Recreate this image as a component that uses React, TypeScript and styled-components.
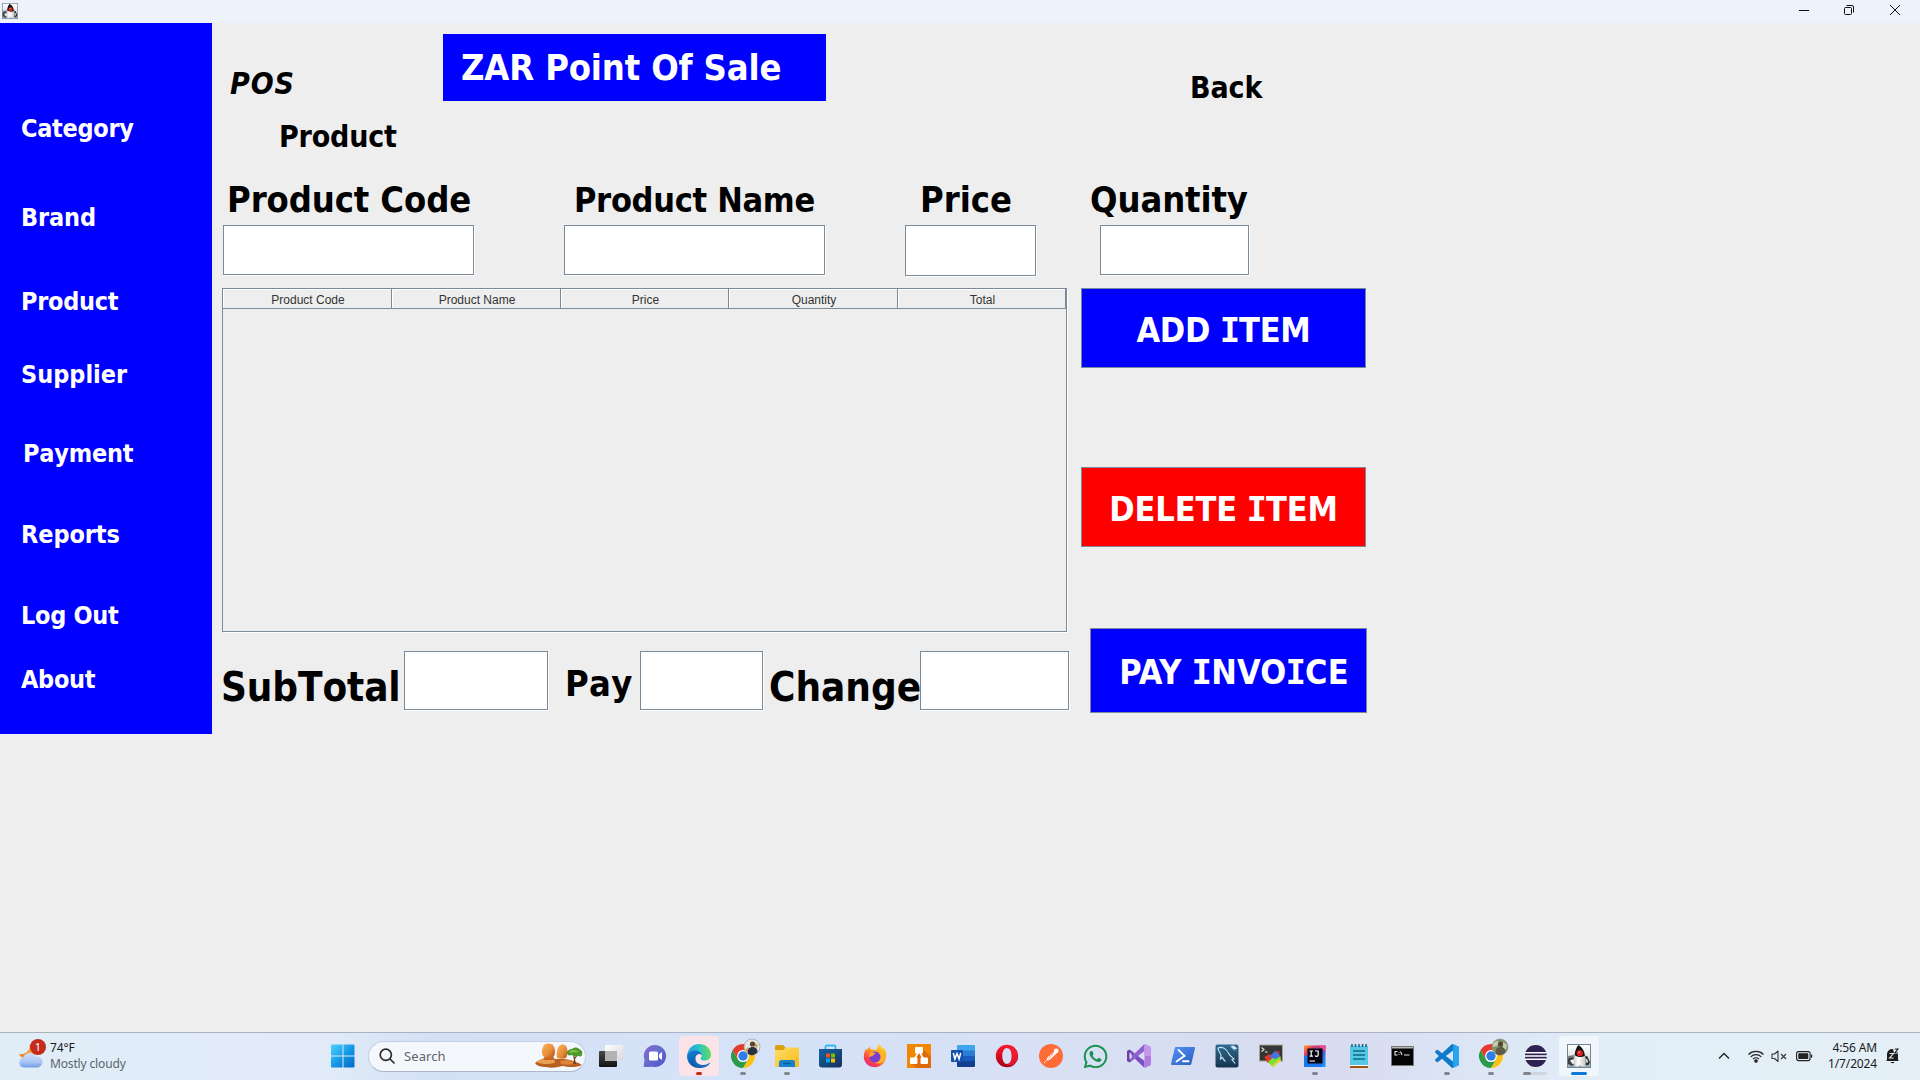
import React from 'react';
import styled, { createGlobalStyle } from 'styled-components';
import { FaWhatsapp } from 'react-icons/fa';

const BLUE = '#0000ff';
const LINE = '#7a8a99';

const GlobalStyle = createGlobalStyle`
  * { box-sizing: border-box; }
  html, body { margin: 0; padding: 0; overflow: hidden; }
`;

const Screen = styled.div`
  display: flex;
  flex-direction: column;
  width: 1920px;
  height: 1080px;
  background: #eeeeee;
  font-family: 'DejaVu Sans Condensed', 'DejaVu Sans', sans-serif;
  font-stretch: condensed;
`;

/* ---------- window frame ---------- */

const TitleBar = styled.header`
  display: flex;
  align-items: center;
  justify-content: space-between;
  height: 23px;
  padding: 0 19px 3px 2px;
  background: #eef3fb;
`;

const AppIcon = styled.span`
  display: flex;
  padding-top: 2px;
`;

const WindowControls = styled.div`
  display: flex;
  gap: 34px;
  svg { display: block; }
`;

const Frame = styled.div`
  display: flex;
  align-items: flex-start;
  height: 1009px;
`;

/* ---------- sidebar ---------- */

const Sidebar = styled.nav`
  display: flex;
  flex-direction: column;
  width: 212px;
  height: 711px;
  padding-left: 21px;
  background: ${BLUE};
`;

const NavLink = styled.a<{ $gap: number; $indent?: number; $track?: number }>`
  margin-top: ${(p) => p.$gap}px;
  padding-left: ${(p) => p.$indent ?? 0}px;
  color: #fff;
  font-size: 25px;
  font-weight: bold;
  font-kerning: none;
  line-height: 30px;
  letter-spacing: ${(p) => p.$track ?? 0}px;
  white-space: nowrap;
`;

/* ---------- main area ---------- */

const Main = styled.main`
  display: flex;
  flex-direction: column;
  padding-left: 10px;
`;

const Header = styled.div`
  display: flex;
  align-items: flex-start;
  height: 156px;
`;

const HeaderTitles = styled.div`
  display: flex;
  flex-direction: column;
  gap: 17px;
  width: 221px;
  padding-top: 43px;
`;

const Label = styled.label<{
  $size: number;
  $line: number;
  $track?: number;
  $indent?: number;
  $italic?: boolean;
}>`
  display: block;
  flex: none;
  margin-left: ${(p) => p.$indent ?? 0}px;
  color: #000;
  font-size: ${(p) => p.$size}px;
  font-weight: bold;
  font-style: ${(p) => (p.$italic ? 'italic' : 'normal')};
  font-kerning: none;
  line-height: ${(p) => p.$line}px;
  letter-spacing: ${(p) => p.$track ?? 0}px;
  white-space: nowrap;
`;

const Banner = styled.h1`
  width: 383px;
  height: 67px;
  margin: 11px 0 0;
  padding-left: 18px;
  background: ${BLUE};
  color: #fff;
  font-size: 36px;
  font-kerning: none;
  line-height: 68px;
  letter-spacing: -0.15px;
  white-space: nowrap;
`;

const BackSlot = styled.div`
  padding: 47px 0 0 364px;
`;

const FieldRow = styled.div`
  display: grid;
  grid-template-columns: 341px 341px 195px 160px;
  height: 109px;
  padding-left: 1px;
`;

const Field = styled.div`
  display: flex;
  flex-direction: column;
  gap: 4px;
`;

const TextBox = styled.input<{ $w: number; $h: number }>`
  display: block;
  flex: none;
  width: ${(p) => p.$w - 1}px;
  height: ${(p) => p.$h - 1}px;
  margin: 0 1px 0 0;
  padding: 0 4px;
  border: 1px solid ${LINE};
  border-radius: 0;
  outline: none;
  background: #fff;
  box-shadow: 1px 1px 0 #fff;
`;

const Workspace = styled.div`
  display: flex;
  gap: 11px;
`;

const Register = styled.section`
  display: flex;
  flex-direction: column;
  gap: 19px;
  width: 848px;
`;

const TablePane = styled.div`
  width: 845px;
  height: 344px;
  border: 1px solid ${LINE};
  box-shadow: 1px 1px 0 #fff;
`;

const TableHead = styled.div`
  display: grid;
  grid-template-columns: 169px 169px 168px 169px 168px;
  grid-template-rows: 20px;
`;

const HeadCell = styled.div`
  padding-left: 2px;
  border-right: 1px solid ${LINE};
  border-bottom: 1px solid ${LINE};
  box-shadow: inset 1px 1px 0 #fff;
  color: #333;
  font: 12px/22px 'Liberation Sans', Arial, sans-serif;
  text-align: center;
`;

const Totals = styled.div`
  display: flex;
  align-items: flex-start;
`;

const TotalLabel = styled.div<{ $w: number; $pad: number }>`
  width: ${(p) => p.$w}px;
  padding: 12px 0 0 ${(p) => p.$pad}px;
`;

const Actions = styled.div`
  display: flex;
  flex-direction: column;
  width: 286px;
`;

const ActionButton = styled.button<{
  $w: number;
  $h: number;
  $gap?: number;
  $end?: number;
  $shift?: number;
  $track: number;
  $color: string;
}>`
  align-self: flex-end;
  width: ${(p) => p.$w}px;
  height: ${(p) => p.$h}px;
  margin: ${(p) => p.$gap ?? 0}px ${(p) => p.$end ?? 1}px 0 0;
  padding: 3px 0 0 ${(p) => p.$shift ?? 0}px;
  border: 1px solid ${LINE};
  border-radius: 0;
  background: ${(p) => p.$color};
  color: #fff;
  font-family: inherit;
  font-size: 34px;
  font-weight: bold;
  line-height: 40px;
  letter-spacing: ${(p) => p.$track}px;
  white-space: nowrap;
`;

const SlabI = styled.span`
  margin: 0 -1px;
  font-family: 'DejaVu Sans Mono', monospace;
  font-stretch: normal;
  line-height: 1;
`;

/* ---------- taskbar ---------- */

const Taskbar = styled.footer`
  display: flex;
  align-items: center;
  height: 48px;
  padding-bottom: 1px;
  border-top: 1px solid #aab1c0;
  background: linear-gradient(90deg, #e0edf7 0%, #e1ebf8 17%, #d3e0f5 23%, #d5e2f7 40%, #d8e0f4 55%, #d8dcf0 70%, #dce6f5 77%, #e3eff8 85%, #e4eff7 100%);
  font-family: 'Noto Sans', 'Open Sans', sans-serif;
  font-stretch: normal;
`;

const Weather = styled.div`
  display: flex;
  gap: 4px;
  width: 331px;
  padding-left: 18px;
`;

const WeatherIcon = styled.span`
  position: relative;
  width: 28px;
  height: 32px;
`;

const Badge = styled.span`
  position: absolute;
  top: -1px;
  left: 12px;
  width: 16px;
  height: 16px;
  border-radius: 50%;
  background: #c42b1c;
  color: #fff;
  font-size: 11px;
  line-height: 16px;
  text-align: center;
`;

const TwoLines = styled.div<{ $right?: boolean }>`
  display: flex;
  flex-direction: column;
  color: #1b1b1b;
  font-size: 12px;
  line-height: 16px;
  text-align: ${(p) => (p.$right ? 'right' : 'left')};
  letter-spacing: -0.15px;
  white-space: nowrap;
`;

const Muted = styled.span`
  color: #5d6369;
`;

const SearchPill = styled.div`
  display: flex;
  align-items: center;
  width: 218px;
  height: 31px;
  margin: 0 3px 0 13px;
  padding: 0 2px 0 10px;
  border: 1px solid #c3cee2;
  border-bottom-color: #adb7cd;
  border-radius: 16px;
  background: #f4f8fd;
  color: #5f6469;
  font-size: 13px;
`;

const SearchText = styled.span`
  flex: 1;
  padding: 0 0 1px 9px;
  letter-spacing: 0.1px;
`;

const Pins = styled.div`
  display: flex;
`;

const Pin = styled.span<{ $bg?: string }>`
  display: flex;
  position: relative;
  align-items: center;
  justify-content: center;
  width: 40px;
  height: 40px;
  margin: 0 2px;
  border-radius: 4px;
  background: ${(p) => p.$bg ?? 'transparent'};
  svg { display: block; overflow: visible; }
`;

const Running = styled.i<{ $w?: number; $color?: string; $left?: number }>`
  position: absolute;
  bottom: 1px;
  left: ${(p) => p.$left ?? 20 - (p.$w ?? 6) / 2}px;
  width: ${(p) => p.$w ?? 6}px;
  height: 3px;
  border-radius: 2px;
  background: ${(p) => p.$color ?? '#80868e'};
`;

const Tray = styled.div`
  display: flex;
  align-items: center;
  margin-left: auto;
  padding-right: 19px;
  svg { display: block; }
`;

const TrayItem = styled.span<{ $gap: number }>`
  margin-left: ${(p) => p.$gap}px;
`;

const Clock = styled.div`
  width: 64px;
  margin-right: 8px;
`;

/* ---------- drawings ---------- */

const Duke = ({ size }: { size: number }) => (
  <svg width={size} height={size} viewBox="0 0 24 24">
    <defs>
      <linearGradient id="dukeBg" x1="0" y1="0" x2="0" y2="1">
        <stop offset="0" stopColor="#ffffff" />
        <stop offset="0.5" stopColor="#e3e8ec" />
        <stop offset="1" stopColor="#90a6b5" />
      </linearGradient>
      <linearGradient id="dukeBody" x1="0" y1="0" x2="1" y2="0">
        <stop offset="0" stopColor="#d9d9d9" />
        <stop offset="0.4" stopColor="#ffffff" />
        <stop offset="1" stopColor="#c4c4c4" />
      </linearGradient>
    </defs>
    <rect x="0.5" y="0.5" width="23" height="23" fill="url(#dukeBg)" stroke="#6f8697" />
    <path d="M1 12l6-1 2 3-3 2-5 0z" fill="#777e82" />
    <path d="M1 15c2-2 5-2 7 0l1 4-4 3-4-2z" fill="#3b3f42" />
    <path d="M3 16.500l4-1.500 2 3-3 2.500z" fill="#f4f4f4" />
    <path d="M16.500 11l4 1.500 2.500 6-2 3-3-1z" fill="#2c3033" />
    <path d="M18.500 14.500l2 1 .500 3-1.500.500z" fill="#dedede" />
    <path d="M8.500 9C6.500 13 6.500 19 8 22.800h3l1.800-1.600 2 1.600h3c1.700-4.500 1.200-9-.800-13z" fill="url(#dukeBody)" stroke="#9a9a9a" strokeWidth=".4" />
    <path d="M11.500 1C9.500 3 7.800 7 7.700 11c2.500 2.300 7 2.800 10 1 .300-4-2.200-8.500-6.200-11z" fill="#141414" />
    <circle cx="12.800" cy="9.200" r="3" fill="#e3201b" />
    <circle cx="12" cy="8.200" r=".9" fill="#f88" />
  </svg>
);

const WeatherArt = () => (
  <svg width="28" height="32" viewBox="0 0 28 32">
    <defs>
      <linearGradient id="moon" x1="0" y1="1" x2="1" y2="0">
        <stop offset="0" stopColor="#f0731c" />
        <stop offset="1" stopColor="#fbc14a" />
      </linearGradient>
      <linearGradient id="cloud" x1="0" y1="0" x2="0" y2="1">
        <stop offset="0" stopColor="#cfe0fb" />
        <stop offset="0.65" stopColor="#a9c4f3" />
        <stop offset="1" stopColor="#6f9be6" />
      </linearGradient>
    </defs>
    <path d="M11.500 4c1 6-3 11-10.500 10 2 4 7 6 11 4 6-2 8-8 5-12z" fill="url(#moon)" />
    <path d="M6 27.500a5 5 0 0 1-1-9.800 7 7 0 0 1 12.800-1.200 5.600 5.600 0 0 1 2.200 11z" fill="url(#cloud)" />
  </svg>
);

const StartLogo = () => (
  <svg width="24" height="24" viewBox="0 0 24 24">
    <defs>
      <linearGradient id="win" x1="0" y1="0" x2="1" y2="1">
        <stop offset="0" stopColor="#4fd2ff" />
        <stop offset="0.5" stopColor="#159be6" />
        <stop offset="1" stopColor="#0067c7" />
      </linearGradient>
    </defs>
    <path d="M1 .500h10.500V11.500H0V1.500a1 1 0 0 1 1-1zM12.500.500H22.500a1 1 0 0 1 1 1v10h-11zM0 12.500h11.500v11H1a1 1 0 0 1-1-1zM12.500 12.500h11v10a1 1 0 0 1-1 1h-10z" fill="url(#win)" />
  </svg>
);

const Magnifier = () => (
  <svg width="16" height="16" viewBox="0 0 16 16" fill="none" stroke="#2a2a2a" strokeWidth="1.700" strokeLinecap="round">
    <circle cx="6.800" cy="6.800" r="5.600" />
    <path d="M11 11l4 4" />
  </svg>
);

const Rocks = () => (
  <svg width="48" height="26" viewBox="0 0 48 26">
    <defs>
      <linearGradient id="rock" x1="0" y1="0" x2="1" y2="1">
        <stop offset="0" stopColor="#ffb65a" />
        <stop offset="0.6" stopColor="#e68a36" />
        <stop offset="1" stopColor="#a8521b" />
      </linearGradient>
    </defs>
    <path d="M0 20c4-3 8-5 14-4l16 0c7 1 14 4 17 6-6 3-14 2-20 1-6 2-12 2-16 1-5 0-9-1-11-4z" fill="#b55f22" />
    <path d="M1 19c4-3 9-5 16-3 3 1 4 3 2 4-6 2-13 1-18-1z" fill="#eaa052" />
    <path d="M25 18c6-2 13-1 17 2-5 2-11 2-16 1z" fill="#dd8437" />
    <path d="M10 13h8l2 4H8z" fill="#c46a26" />
    <path d="M9 2c2-2 7-2 9 0 2 3 3 7 1 11-3 2-8 2-11 0-2-4-1-8 1-11z" fill="url(#rock)" />
    <path d="M24 3c2-2 5-2 7 0 2 3 2 8 0 12-3 1-6 1-9 0-1-4 0-9 2-12z" fill="url(#rock)" />
    <path d="M38 12l1 5-1 4h3l-1-5 3-4-3 2z" fill="#6e3e1d" />
    <path d="M32 10c0-3 3-4 5-4 2-2 6-2 7 0 3 1 4 3 3 5 1 2-2 3-4 2-3 1-5 0-6-1-3 1-5 0-5-2z" fill="#4f9a2e" />
    <path d="M34 9c1-2 5-3 9-1 1 1-2 2-4 1-2 1-4 1-5 0z" fill="#83c046" />
  </svg>
);

const TaskView = () => (
  <svg width="24" height="24" viewBox="0 0 24 24">
    <defs>
      <linearGradient id="tvDark" x1="0" y1="0" x2="0" y2="1">
        <stop offset="0" stopColor="#4a4a4a" />
        <stop offset="1" stopColor="#111" />
      </linearGradient>
      <linearGradient id="tvLight" x1="0" y1="0" x2="1" y2="1">
        <stop offset="0" stopColor="#fff" />
        <stop offset="1" stopColor="#d8d8d8" />
      </linearGradient>
    </defs>
    <rect x="0" y="7" width="18" height="16" rx="1" fill="url(#tvDark)" />
    <rect x="6" y="1" width="18" height="16" rx="1" fill="url(#tvLight)" />
    <path d="M6 7h12v10H7a1 1 0 0 1-1-1z" fill="#b2b2b2" />
  </svg>
);

const Chat = () => (
  <svg width="24" height="24" viewBox="0 0 24 24">
    <defs>
      <linearGradient id="chat" x1="0" y1="0" x2="1" y2="1">
        <stop offset="0" stopColor="#8b62c9" />
        <stop offset="0.4" stopColor="#6a6fd0" />
        <stop offset="1" stopColor="#4f52c4" />
      </linearGradient>
    </defs>
    <path d="M12 1a11 11 0 1 1-2 21.800L1.500 23a.800.800 0 0 1-.800-1L1.500 16A11 11 0 0 1 12 1z" fill="url(#chat)" />
    <rect x="6" y="7.500" width="9" height="9" rx="1.500" fill="#fff" />
    <path d="M16 10.500l3-2.500v8l-3-2.500z" fill="#fff" />
  </svg>
);

const Edge = () => (
  <svg width="24" height="24" viewBox="0 0 24 24">
    <defs>
      <linearGradient id="edgeTop" x1="0" y1=".5" x2="1" y2=".4">
        <stop offset="0" stopColor="#1f9fe0" />
        <stop offset="0.5" stopColor="#29c3c8" />
        <stop offset="1" stopColor="#66de55" />
      </linearGradient>
      <linearGradient id="edgeLow" x1="0" y1="0" x2="0.6" y2="1">
        <stop offset="0" stopColor="#1284d8" />
        <stop offset="1" stopColor="#0b4f9e" />
      </linearGradient>
    </defs>
    <path d="M.300 10.500C1.200 4.500 6 0 12 0c7 0 12 5 12 10.500 0 4-3 6-6.200 6-3 0-4.300-1-4.300-1.800 0-.700 1.200-1.200 1.200-3.200 0-2.800-2.700-5-6.200-5C4.500 6.500 1.500 8 .300 10.500z" fill="url(#edgeTop)" />
    <path d="M.300 10.500C1.500 8 4.500 6.300 8 6.300c3.500 0 6.500 2 6.700 5C14 10.200 12.600 9.600 11.500 10c-3.500 1.500-4.500 5-2.500 8.500s6 5 9 3.500C12 26.500 0 23 0 12z" fill="url(#edgeLow)" />
    <path d="M9.500 11.300C7.500 13.500 8 19 13 20.500c4 1.200 7 .100 9.300-1.500.500-.400.900.100.600.600C21 22.500 17 24.300 13 24 7 23.500 4.500 16 9.500 11.300z" fill="#1668b8" />
  </svg>
);

const Chrome = ({ person }: { person: 'city' | 'garden' }) => (
  <svg width="24" height="24" viewBox="0 0 24 24">
    <circle cx="12" cy="12" r="12" fill="#fff" />
    <path d="M12 6h10.400A12 12 0 0 1 12 24l5.200-9z" fill="#fbc116" />
    <path d="M1.600 6A12 12 0 0 0 12 24l5.200-9A6 6 0 0 1 6.800 15z" fill="#2a9b4a" />
    <path d="M1.600 6l5.200 9L8 9l4-3h10.400A12 12 0 0 0 1.600 6z" fill="#e33b2e" />
    <circle cx="12" cy="12" r="5.900" fill="#fff" />
    <circle cx="12" cy="12" r="4.700" fill="#2f7de9" />
    <circle cx="21" cy="3" r="8" fill={person === 'city' ? '#e8e6e3' : '#80936b'} stroke="#8d8f8c" strokeWidth=".6" />
    <path d={person === 'city' ? 'M14 6l3-3 1 2-2 3zM24-1l3 2-1 3-3-2z' : 'M14 0l3-3 4 1-3 4-4 1zM24-2l4 3-1 5-3-2z'} fill={person === 'city' ? '#c9a65a' : '#c8ceb2'} />
    <circle cx="21.500" cy="0" r="2.600" fill="#5b4335" />
    <path d="M16.500 9c0-4 2-6 5-6s5 1.500 5 5c-3 4-8 4-10 1z" fill={person === 'city' ? '#2b3040' : '#5d5a45'} />
  </svg>
);

const Explorer = () => (
  <svg width="24" height="24" viewBox="0 0 24 24">
    <defs>
      <linearGradient id="folder" x1="0" y1="0" x2="1" y2="1">
        <stop offset="0" stopColor="#ffdc6a" />
        <stop offset="1" stopColor="#f8bb17" />
      </linearGradient>
    </defs>
    <path d="M0 2.500A1.500 1.500 0 0 1 1.500 1H8l2.500 2.500V8H0z" fill="#d9a00c" />
    <path d="M0 6h8.500l2-2.500H22.500A1.500 1.500 0 0 1 24 5v16.500a1.500 1.500 0 0 1-1.500 1.500H1.500A1.500 1.500 0 0 1 0 21.500z" fill="url(#folder)" />
    <path d="M4 23v-4.500A2.500 2.500 0 0 1 6.500 16h11a2.500 2.500 0 0 1 2.500 2.500V23z" fill="#1583cf" />
    <rect x="8" y="18.800" width="8" height="1.400" rx=".7" fill="#0b5a9a" />
  </svg>
);

const Store = () => (
  <svg width="24" height="24" viewBox="0 0 24 24">
    <defs>
      <linearGradient id="bag" x1="0" y1="0" x2="1" y2="1">
        <stop offset="0" stopColor="#1565a8" />
        <stop offset="1" stopColor="#15305a" />
      </linearGradient>
    </defs>
    <path d="M6.500 6V3A1.500 1.500 0 0 1 8 1.500h7A1.500 1.500 0 0 1 16.500 3v3" fill="none" stroke="#35b5ec" strokeWidth="1.800" />
    <path d="M0 5h23v15.500a3 3 0 0 1-3 3H3a3 3 0 0 1-3-3z" fill="url(#bag)" />
    <path d="M7 9.500h4v4H7z" fill="#f25022" /><path d="M12 9.500h4v4h-4z" fill="#7fba00" />
    <path d="M7 14.500h4v4H7z" fill="#00a4ef" /><path d="M12 14.500h4v4h-4z" fill="#ffb900" />
  </svg>
);

const Firefox = () => (
  <svg width="24" height="24" viewBox="0 0 24 24">
    <defs>
      <linearGradient id="fox" x1=".8" y1="0" x2=".2" y2="1">
        <stop offset="0" stopColor="#ffe226" />
        <stop offset="0.4" stopColor="#ff9a1f" />
        <stop offset="0.75" stopColor="#fb4048" />
        <stop offset="1" stopColor="#e8238b" />
      </linearGradient>
    </defs>
    <path d="M15.500 0c2 1.500 3.500 3 4 5 .800-.200 1.300-.900 1.400-1.400 2 3 2.600 6 2.100 9.400C22 19 17.500 23.300 12 23.300 5.500 23.300.800 18.500.800 12.500.800 9 2 6.500 3.300 4.500c0 1 .200 1.600.500 2C4.500 5 6 3 7.300 2.500c-.300 1.200 0 2.300.700 3 1.500-.200 3.500.100 4.500.800C14 5 15.200 3 15.500 0z" fill="url(#fox)" />
    <circle cx="11.800" cy="13" r="5.600" fill="#7b3fd0" />
    <path d="M6.500 9c2-1.500 5-.500 6.500.800-2 .100-2.500 1.200-3.200 2-.800 1-3.300.500-3.800 1.500z" fill="#ffa52b" />
    <path d="M12.500 6.500c4 1 6 4 5.500 7.500-.500 2.500-3 4.500-6 4.500 6 3 11-1 9.500-6.500-1-3.500-4.500-6-9-5.500z" fill="#ffb42c" />
  </svg>
);

const DrawIo = () => (
  <svg width="24" height="24" viewBox="0 0 24 24">
    <rect width="24" height="24" fill="#f08705" />
    <path d="M15 4l9 9v11H9l-5-5 6-8z" fill="#df6c0c" />
    <path d="M12 7L6.500 17M12 7l5.500 10" stroke="#fff" strokeWidth="1.600" />
    <rect x="8" y="3" width="8" height="6.500" rx="1" fill="#fff" />
    <rect x="3" y="13.500" width="7.500" height="6.500" rx="1" fill="#fff" />
    <rect x="13.500" y="13.500" width="7.500" height="6.500" rx="1" fill="#fff" />
  </svg>
);

const Word = () => (
  <svg width="24" height="24" viewBox="0 0 24 24">
    <path d="M6 2a1 1 0 0 1 1-1h16a1 1 0 0 1 1 1v5H6z" fill="#41a5ee" />
    <path d="M6 6.500h18V12H6z" fill="#2b7cd3" />
    <path d="M6 12h18v5.500H6z" fill="#185abd" />
    <path d="M6 17h18v5a1 1 0 0 1-1 1H7a1 1 0 0 1-1-1z" fill="#103f91" />
    <rect x="0" y="6" width="12" height="12" rx="1" fill="#1450ab" />
    <path d="M2.300 9l1.600 6 2.100-5.500 2.100 5.500 1.600-6" fill="none" stroke="#fff" strokeWidth="1.500" />
  </svg>
);

const Opera = () => (
  <svg width="24" height="24" viewBox="0 0 24 24">
    <defs>
      <linearGradient id="opera" x1="0" y1="0" x2="0" y2="1">
        <stop offset="0" stopColor="#ff1b2d" />
        <stop offset="1" stopColor="#a70014" />
      </linearGradient>
    </defs>
    <path fillRule="evenodd" d="M12 .800A11.200 11.200 0 1 1 12 23.200 11.200 11.200 0 0 1 12 .800zM12 4c-2.800 0-4.700 3.500-4.700 8s1.900 8 4.700 8 4.700-3.500 4.700-8S14.800 4 12 4z" fill="url(#opera)" />
    <path d="M12 4c3-2.500 7-1 9 2 2 4 2 8 0 12-2 3-6 4.500-9 2 2.800 0 4.700-3.500 4.700-8S14.800 4 12 4z" fill="#f0233a" opacity=".7" />
  </svg>
);

const Postman = () => (
  <svg width="24" height="24" viewBox="0 0 24 24">
    <circle cx="12" cy="12" r="12" fill="#ff6c37" />
    <circle cx="17.200" cy="6.800" r="2.400" fill="#fff" />
    <path d="M15.500 7.500l2 2-6.500 6-4 1.500 1.500-3.500z" fill="#fff" />
    <path d="M10 12.500l3 .300M6.500 17.500l-1.500 1.500" stroke="#fff" strokeWidth="1" />
    <path d="M9.500 14.500l5-5" stroke="#ff6c37" strokeWidth=".7" />
  </svg>
);

const VisualStudio = () => (
  <svg width="24" height="24" viewBox="0 0 24 24">
    <path fillRule="evenodd" d="M0 7l2.500-1.500L7 9l-.500 1.800-4-2.300v7l4-2.300L7 15l-4.500 3.500L0 17z" fill="#6b3fa8" />
    <path d="M2.500 5.500L17.500 17v7L5 12z" fill="#7a4fc0" />
    <path d="M2.500 18.500L17.500 7V0L5 12z" fill="#8f62cc" />
    <path d="M17.500 0L24 3v18l-6.500 3z" fill="#b07be0" />
    <path d="M17.500 0L24 3v9h-6.500z" fill="#c497ee" />
  </svg>
);

const PowerShell = () => (
  <svg width="24" height="24" viewBox="0 0 24 24">
    <defs>
      <linearGradient id="ps" x1="0" y1="0" x2="1" y2="1">
        <stop offset="0" stopColor="#5391fe" />
        <stop offset="1" stopColor="#2a5fb8" />
      </linearGradient>
    </defs>
    <path d="M5 3h18a1 1 0 0 1 1 1.200L20.300 20a1.300 1.300 0 0 1-1.300 1H1a1 1 0 0 1-1-1.200L3.800 4A1.300 1.300 0 0 1 5 3z" fill="url(#ps)" />
    <path d="M7.500 6l6 5.800L5.500 17.500M12 17.300h5.500" fill="none" stroke="#fff" strokeWidth="1.900" strokeLinecap="round" />
  </svg>
);

const MySql = () => (
  <svg width="24" height="24" viewBox="0 0 24 24">
    <defs>
      <linearGradient id="my" x1="0" y1="0" x2="0" y2="1">
        <stop offset="0" stopColor="#2e6c94" />
        <stop offset="1" stopColor="#16344d" />
      </linearGradient>
    </defs>
    <rect x=".5" y=".5" width="23" height="23" rx="2" fill="url(#my)" />
    <path d="M3 4c4-2 9 1 11 6 .800 2 3 3 5 5l-2 .500 3 4M3 4c0 3 2 4 3 7l-.500 4 2-1.500c.500 1.500 1.500 3 3 4" fill="none" stroke="#cfe1ee" strokeWidth="1.100" />
    <path d="M16 2.500l2.500 2.500L22 4.500 18.500 2zM18 4l2 2.500" stroke="#dce9f2" strokeWidth=".8" fill="#dce9f2" />
  </svg>
);

const Cmder = () => (
  <svg width="24" height="24" viewBox="0 0 24 24">
    <rect x=".5" y="1" width="23" height="16" fill="#353535" stroke="#aaa58f" />
    <path d="M2.500 3.500L5 5.500 2.500 7.500M6 8h2.500" fill="none" stroke="#eee" strokeWidth="1.100" />
    <path d="M5.500 13l5-3 3 3-2 5-3 1z" fill="#e2352c" />
    <path d="M11 12l5-5 4 2 1 3-5 4-3 0z" fill="#4773dd" />
    <path d="M17 7l4 .500L19 10z" fill="#d8362d" />
    <path d="M8.500 18l5-4 3 1 5-3 .500 4-8 7z" fill="#7ddf35" />
    <path d="M13 23.500l9-7-2-1-7 6z" fill="#f1ce25" />
  </svg>
);

const IntelliJ = () => (
  <svg width="24" height="24" viewBox="0 0 24 24">
    <defs>
      <linearGradient id="ij" x1="0" y1="0" x2="1" y2="1">
        <stop offset="0" stopColor="#f9a22b" />
        <stop offset="0.25" stopColor="#e7365f" />
        <stop offset="0.55" stopColor="#4a52d8" />
        <stop offset="1" stopColor="#13a4f5" />
      </linearGradient>
    </defs>
    <path d="M1 1.500h21.500v21.500H1z" fill="url(#ij)" />
    <path d="M1 12l4-1v8h14v4H1z" fill="#1b77f0" />
    <path d="M15 1.500h7.500V8L19 5z" fill="#f9447c" />
    <rect x="4.500" y="4.500" width="15" height="15" fill="#060312" />
    <path d="M6.500 7h3.500M8.200 7v5M6.500 12.200h3.500M12 7h3.200v4c0 1-.800 1.400-1.500 1.400s-1.400-.300-1.700-.900M6.500 17h5.500" fill="none" stroke="#fff" strokeWidth="1.200" />
  </svg>
);

const Notepad = () => (
  <svg width="24" height="24" viewBox="0 0 24 24">
    <path d="M3 19h18v5H3z" fill="#a4530e" />
    <path d="M3 20.500h18v1.500H3z" fill="#fff" />
    <path d="M3 2h18v19H3z" fill="#55c8e6" />
    <path d="M5 0v3M8.500 0v3M12 0v3M15.500 0v3M19 0v3" stroke="#13617f" strokeWidth="1.500" />
    <path d="M6 7h12M6 11h12M6 15h12" stroke="#126585" strokeWidth="1.500" />
  </svg>
);

const CommandPrompt = () => (
  <svg width="24" height="24" viewBox="0 0 24 24">
    <rect x=".5" y="2.500" width="22" height="19" fill="#050505" stroke="#777" />
    <path d="M1 3h21v1.500H1z" fill="#b9b9b9" />
    <path d="M6.500 7.500H4v3.500h2.500M8 8v.800M8 10.200v.800M9.500 7.500l1.500 3.500M13 11h5.500" fill="none" stroke="#e6e6e6" strokeWidth="1.100" />
  </svg>
);

const VsCode = () => (
  <svg width="24" height="24" viewBox="0 0 100 100">
    <path d="M96.460 10.800L75.860.870a6.230 6.230 0 00-7.110 1.200L29.350 38.040 12.190 25.010a4.160 4.160 0 00-5.320.240L1.360 30.260a4.170 4.170 0 000 6.170L16.240 50 1.350 63.580a4.170 4.170 0 000 6.170l5.510 5.010a4.160 4.160 0 005.320.240l17.170-13.030 39.460 35.960a6.220 6.220 0 007.060 1.190l20.590-9.910A6.250 6.250 0 00100 83.570V16.430a6.250 6.250 0 00-3.540-5.630zM75.020 72.700L45.110 50l29.910-22.700z" fill="#0d7bc9" />
    <path d="M75.860.870l20.600 9.930A6.250 6.250 0 01100 16.430v67.140a6.250 6.250 0 01-3.540 5.680L75.870 99.100z" fill="#27a5ee" />
  </svg>
);

const Eclipse = () => (
  <svg width="24" height="24" viewBox="0 0 24 24">
    <path d="M11 1A11.200 11.200 0 0 0 11 23 14 14 0 0 1 11 1z" fill="#f09a29" />
    <circle cx="12.800" cy="12" r="11" fill="#2c2255" />
    <path d="M1.500 8.800h22M1 12h23M1.500 15.200h22" stroke="#fff" strokeWidth="1.400" />
  </svg>
);

const WhatsApp = () => <FaWhatsapp size={27} color="#17934f" />;

const Minimise = () => (
  <svg width="12" height="12" viewBox="0 0 12 12">
    <path d="M2 6.500h10" stroke="#111" />
  </svg>
);
const Restore = () => (
  <svg width="12" height="12" viewBox="0 0 12 12" fill="none" stroke="#111">
    <rect x="1.500" y="3.500" width="7" height="7" rx="1" />
    <path d="M3.500 1.500H9a1.500 1.500 0 0 1 1.500 1.500v5.500" />
  </svg>
);
const Close = () => (
  <svg width="12" height="12" viewBox="0 0 12 12">
    <path d="M1 1l10 10M11 1l-10 10" stroke="#111" />
  </svg>
);

const Chevron = () => (
  <svg width="12" height="12" viewBox="0 0 12 12">
    <path d="M1 8.500l5-5 5 5" fill="none" stroke="#222" strokeWidth="1.400" />
  </svg>
);
const Wifi = () => (
  <svg width="16" height="16" viewBox="0 0 16 16" fill="none" stroke="#222" strokeWidth="1.200">
    <path d="M.500 6.500a10.500 10.500 0 0 1 15 0M2.700 8.900a7.400 7.400 0 0 1 10.600 0M5 11.100a4.300 4.300 0 0 1 6 0" />
    <circle cx="8" cy="13" r="1.200" fill="#222" />
  </svg>
);
const Mute = () => (
  <svg width="16" height="16" viewBox="0 0 16 16" fill="none" stroke="#333" strokeWidth="1.100">
    <path d="M1 6h2.500L7 3v10.500l-3.500-3H1z" strokeLinejoin="round" />
    <path d="M10 6l5 5M15 6l-5 5" />
  </svg>
);
const Battery = () => (
  <svg width="17" height="16" viewBox="0 0 17 16">
    <rect x=".6" y="3.600" width="13.500" height="9" rx="2" fill="none" stroke="#222" strokeWidth="1.100" />
    <rect x="2.300" y="5.300" width="10" height="5.600" rx=".6" fill="#222" />
    <path d="M15 6.200c1 .200 1.300.800 1.300 1.900s-.300 1.700-1.300 1.900z" fill="#222" />
  </svg>
);
const Bell = () => (
  <svg width="16" height="16" viewBox="0 0 16 16">
    <path d="M2 11.500V6a5 5 0 0 1 6-4.900L13 6v5.500l.700 1.500H1.300z" fill="#1d1d1d" />
    <path d="M5.500 14a2.200 2.200 0 0 0 4 0z" fill="#1d1d1d" />
    <path d="M8 0h6v6H9z" fill="#e4eff7" />
    <path d="M4.500 5.500h4L4.500 10h4" fill="none" stroke="#e4eff7" strokeWidth="1.100" />
    <path d="M9.800 1h3.200L9.800 5h3.200" fill="none" stroke="#1d1d1d" strokeWidth="1.100" />
  </svg>
);

/* ---------- content ---------- */

const NAV = [
  { text: 'Category', gap: 91, track: -0.3 },
  { text: 'Brand', gap: 59, track: -0.1 },
  { text: 'Product', gap: 54, track: -0.3 },
  { text: 'Supplier', gap: 43 },
  { text: 'Payment', gap: 49, indent: 2, track: -0.2 },
  { text: 'Reports', gap: 51, track: -0.1 },
  { text: 'Log Out', gap: 51, track: -0.3 },
  { text: 'About', gap: 34, track: -0.3 },
];

const FIELDS = [
  { text: 'Product Code', size: 36, indent: 4, track: -0.1, w: 252, h: 51 },
  { text: 'Product Name', size: 34, indent: 10, track: -0.3, w: 262, h: 51 },
  { text: 'Price', size: 36, indent: 15, track: 0, w: 132, h: 52 },
  { text: 'Quantity', size: 36, indent: -10, track: -0.1, w: 150, h: 51 },
];

const TOTALS = [
  { text: 'SubTotal', size: 40, line: 48, labelWidth: 182, indent: -1, pad: 0, track: -0.1, w: 145 },
  { text: 'Pay', size: 36, line: 42, labelWidth: 91, indent: 0, pad: 16, track: 0.3, w: 124 },
  { text: 'Change', size: 40, line: 48, labelWidth: 156, indent: 0, pad: 5, track: 0, w: 150 },
];

const COLUMNS = ['Product Code', 'Product Name', 'Price', 'Quantity', 'Total'];

const Caption = ({ text }: { text: string }) => (
  <>{text.split(/(I)/).map((part, i) => (part === 'I' ? <SlabI key={i}>I</SlabI> : part))}</>
);

type PinItem = { icon: React.ReactNode; bg?: string; mark?: React.ReactNode };

const PINS: PinItem[] = [
  { icon: <TaskView /> },
  { icon: <Chat /> },
  { icon: <Edge />, bg: '#fbe4e8', mark: <Running $color="#c42b1c" /> },
  { icon: <Chrome person="city" />, mark: <Running /> },
  { icon: <Explorer />, mark: <Running /> },
  { icon: <Store /> },
  { icon: <Firefox /> },
  { icon: <DrawIo /> },
  { icon: <Word /> },
  { icon: <Opera /> },
  { icon: <Postman /> },
  { icon: <WhatsApp /> },
  { icon: <VisualStudio /> },
  { icon: <PowerShell /> },
  { icon: <MySql /> },
  { icon: <Cmder /> },
  { icon: <IntelliJ />, mark: <Running /> },
  { icon: <Notepad /> },
  { icon: <CommandPrompt /> },
  { icon: <VsCode />, mark: <Running /> },
  { icon: <Chrome person="garden" />, mark: <Running /> },
  {
    icon: <Eclipse />,
    mark: (
      <>
        <Running $w={24} $color="#d0d6de" />
        <Running $w={8} $left={8} />
      </>
    ),
  },
  { icon: <Duke size={24} />, bg: '#f1f6fc', mark: <Running $w={16} $color="#0a78d4" /> },
];

export default function App() {
  return (
    <Screen>
      <GlobalStyle />
      <TitleBar>
        <AppIcon>
          <Duke size={16} />
        </AppIcon>
        <WindowControls>
          <Minimise />
          <Restore />
          <Close />
        </WindowControls>
      </TitleBar>

      <Frame>
        <Sidebar>
          {NAV.map((n) => (
            <NavLink key={n.text} $gap={n.gap} $indent={n.indent} $track={n.track}>
              {n.text}
            </NavLink>
          ))}
        </Sidebar>

        <Main>
          <Header>
            <HeaderTitles>
              <Label $size={30} $line={36} $indent={8} $track={0.9} $italic>
                POS
              </Label>
              <Label $size={30} $line={36} $indent={57} $track={-0.2}>
                Product
              </Label>
            </HeaderTitles>
            <Banner>ZAR Point Of Sale</Banner>
            <BackSlot>
              <Label $size={30} $line={36} $track={-0.1}>
                Back
              </Label>
            </BackSlot>
          </Header>

          <FieldRow>
            {FIELDS.map((f) => (
              <Field key={f.text}>
                <Label $size={f.size} $line={42} $indent={f.indent} $track={f.track}>
                  {f.text}
                </Label>
                <TextBox $w={f.w} $h={f.h} />
              </Field>
            ))}
          </FieldRow>

          <Workspace>
            <Register>
              <TablePane>
                <TableHead>
                  {COLUMNS.map((c) => (
                    <HeadCell key={c}>{c}</HeadCell>
                  ))}
                </TableHead>
              </TablePane>
              <Totals>
                {TOTALS.map((t) => (
                  <React.Fragment key={t.text}>
                    <TotalLabel $w={t.labelWidth} $pad={t.pad}>
                      <Label $size={t.size} $line={t.line} $track={t.track} $indent={t.indent}>
                        {t.text}
                      </Label>
                    </TotalLabel>
                    <TextBox $w={t.w} $h={60} />
                  </React.Fragment>
                ))}
              </Totals>
            </Register>
            <Actions>
              <ActionButton $w={285} $h={80} $track={-0.2} $color={BLUE}>
                <Caption text="ADD ITEM" />
              </ActionButton>
              <ActionButton $w={285} $h={80} $gap={99} $track={-0.1} $color="#ff0000">
                <Caption text="DELETE ITEM" />
              </ActionButton>
              <ActionButton $w={277} $h={85} $gap={81} $end={0} $shift={11} $track={0.2} $color={BLUE}>
                <Caption text="PAY INVOICE" />
              </ActionButton>
            </Actions>
          </Workspace>
        </Main>
      </Frame>

      <Taskbar>
        <Weather>
          <WeatherIcon>
            <WeatherArt />
            <Badge>1</Badge>
          </WeatherIcon>
          <TwoLines>
            <span>74°F</span>
            <Muted>Mostly cloudy</Muted>
          </TwoLines>
        </Weather>
        <StartLogo />
        <SearchPill>
          <Magnifier />
          <SearchText>Search</SearchText>
          <Rocks />
        </SearchPill>
        <Pins>
          {PINS.map((p, i) => (
            <Pin key={i} $bg={p.bg}>
              {p.icon}
              {p.mark}
            </Pin>
          ))}
        </Pins>
        <Tray>
          <TrayItem $gap={0}>
            <Chevron />
          </TrayItem>
          <TrayItem $gap={18}>
            <Wifi />
          </TrayItem>
          <TrayItem $gap={7}>
            <Mute />
          </TrayItem>
          <TrayItem $gap={9}>
            <Battery />
          </TrayItem>
          <Clock>
            <TwoLines $right>
              <span>4:56 AM</span>
              <span>1/7/2024</span>
            </TwoLines>
          </Clock>
          <Bell />
        </Tray>
      </Taskbar>
    </Screen>
  );
}
